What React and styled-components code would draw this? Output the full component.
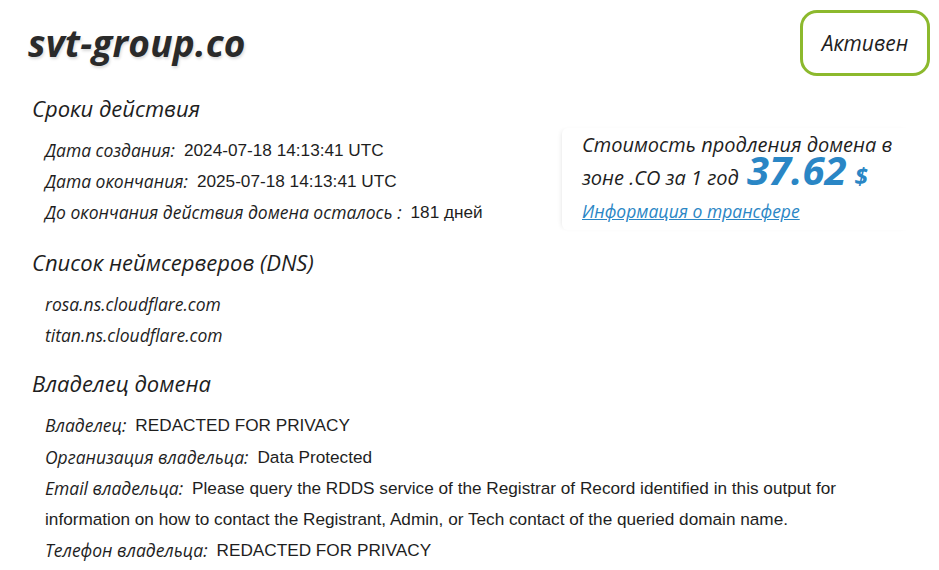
import styled, { createGlobalStyle } from "styled-components";

const GlobalStyle = createGlobalStyle`
  body {
    margin: 0;
    background: #ffffff;
    color: #1e1e1e;
    font-family: "Open Sans", "Liberation Sans", sans-serif;
  }
`;

const domain = {
  name: "svt-group.co",
  status: "Активен",
  created: "2024-07-18 14:13:41 UTC",
  expires: "2025-07-18 14:13:41 UTC",
  daysLeft: "181 дней",
  ns: ["rosa.ns.cloudflare.com", "titan.ns.cloudflare.com"],
  price: "37.62",
  zone: ".CO",
};

const owner = [
  { label: "Владелец:", value: "REDACTED FOR PRIVACY" },
  { label: "Организация владельца:", value: "Data Protected" },
  {
    label: "Email владельца:",
    value:
      "Please query the RDDS service of the Registrar of Record identified in this output for information on how to contact the Registrant, Admin, or Tech contact of the queried domain name.",
  },
  { label: "Телефон владельца:", value: "REDACTED FOR PRIVACY" },
];

const App = () => {
  return (
    <>
      <GlobalStyle />
      <Container>
        <Header>
          <DomainName>{domain.name}</DomainName>
          <StatusBadge>{domain.status}</StatusBadge>
        </Header>

        <TopSection>
          <Dates>
            <SectionTitle>Сроки действия</SectionTitle>
            <List>
              <Row>
                <Label>Дата создания:</Label>
                <Value>{domain.created}</Value>
              </Row>
              <Row>
                <Label>Дата окончания:</Label>
                <Value>{domain.expires}</Value>
              </Row>
              <Row>
                <Label>До окончания действия домена осталось :</Label>
                <Value>{domain.daysLeft}</Value>
              </Row>
            </List>
          </Dates>
          <PriceBox>
            <PriceText>
              Стоимость продления домена в зоне {domain.zone} за 1 год{" "}
              <Price>{domain.price}</Price>
              <Currency>$</Currency>
            </PriceText>
            <TransferLink href="#">Информация о трансфере</TransferLink>
          </PriceBox>
        </TopSection>

        <SectionTitle>Список неймсерверов (DNS)</SectionTitle>
        <List>
          {domain.ns.map((item) => (
            <Row key={item}>
              <Label>{item}</Label>
            </Row>
          ))}
        </List>

        <SectionTitle>Владелец домена</SectionTitle>
        <List>
          {owner.map((item) => (
            <Row key={item.label}>
              <Label>{item.label}</Label>
              <Value>{item.value}</Value>
            </Row>
          ))}
        </List>
      </Container>
    </>
  );
};

export default App;

const Container = styled.div`
  width: 939px;
  box-sizing: border-box;
  padding: 10px 9px 0 32px;
`;

const Header = styled.div`
  display: flex;
  justify-content: space-between;
  align-items: flex-start;
`;

const DomainName = styled.h1`
  margin: 11px 0 0 -4px;
  font-size: 37px;
  font-weight: 700;
  font-style: italic;
  color: #2a2a2a;
  line-height: 44px;
  letter-spacing: 0.2px;
  text-shadow: 1px 2px 3px rgba(0, 0, 0, 0.15);
`;

const StatusBadge = styled.div`
  width: 130px;
  height: 66px;
  box-sizing: border-box;
  border: 3px solid #8cb92d;
  border-radius: 17px;
  display: flex;
  align-items: center;
  justify-content: center;
  font-size: 21px;
  font-style: italic;
  color: #1e1e1e;
`;

const TopSection = styled.div`
  display: flex;
  align-items: flex-start;
`;

const Dates = styled.div`
  width: 530px;
`;

const SectionTitle = styled.h2`
  margin: 16px 0 11px;
  font-size: 22px;
  font-weight: 400;
  font-style: italic;
  line-height: 32px;
`;

const List = styled.div`
  padding-left: 13px;
  max-width: 840px;
`;

const Row = styled.div`
  font-size: 17.5px;
  line-height: 31.2px;
`;

const Label = styled.span`
  font-style: italic;
  margin-right: 9px;
  vertical-align: top;
`;

const Value = styled.span`
  font-family: "Liberation Sans", sans-serif;
  font-size: 17.2px;
  vertical-align: top;
`;

const PriceBox = styled.div`
  margin-top: 52px;
  padding: 0 0 6px 20px;
  border-radius: 6px;
  box-shadow: -3px 0 5px -3px rgba(0, 0, 0, 0.12);
  width: 330px;
`;

const PriceText = styled.div`
  font-size: 20px;
  font-style: italic;
  line-height: 33px;
`;

const Price = styled.span`
  font-size: 40px;
  font-weight: 700;
  color: #2a86c5;
  margin-left: 3px;
  line-height: 16px;
`;

const Currency = styled.span`
  font-size: 24px;
  font-weight: 700;
  color: #2a86c5;
  margin-left: 8px;
  line-height: 16px;
`;

const TransferLink = styled.a`
  display: inline-block;
  margin-top: 4px;
  font-size: 17.5px;
  font-style: italic;
  color: #2a86c5;
  line-height: 26px;
`;
